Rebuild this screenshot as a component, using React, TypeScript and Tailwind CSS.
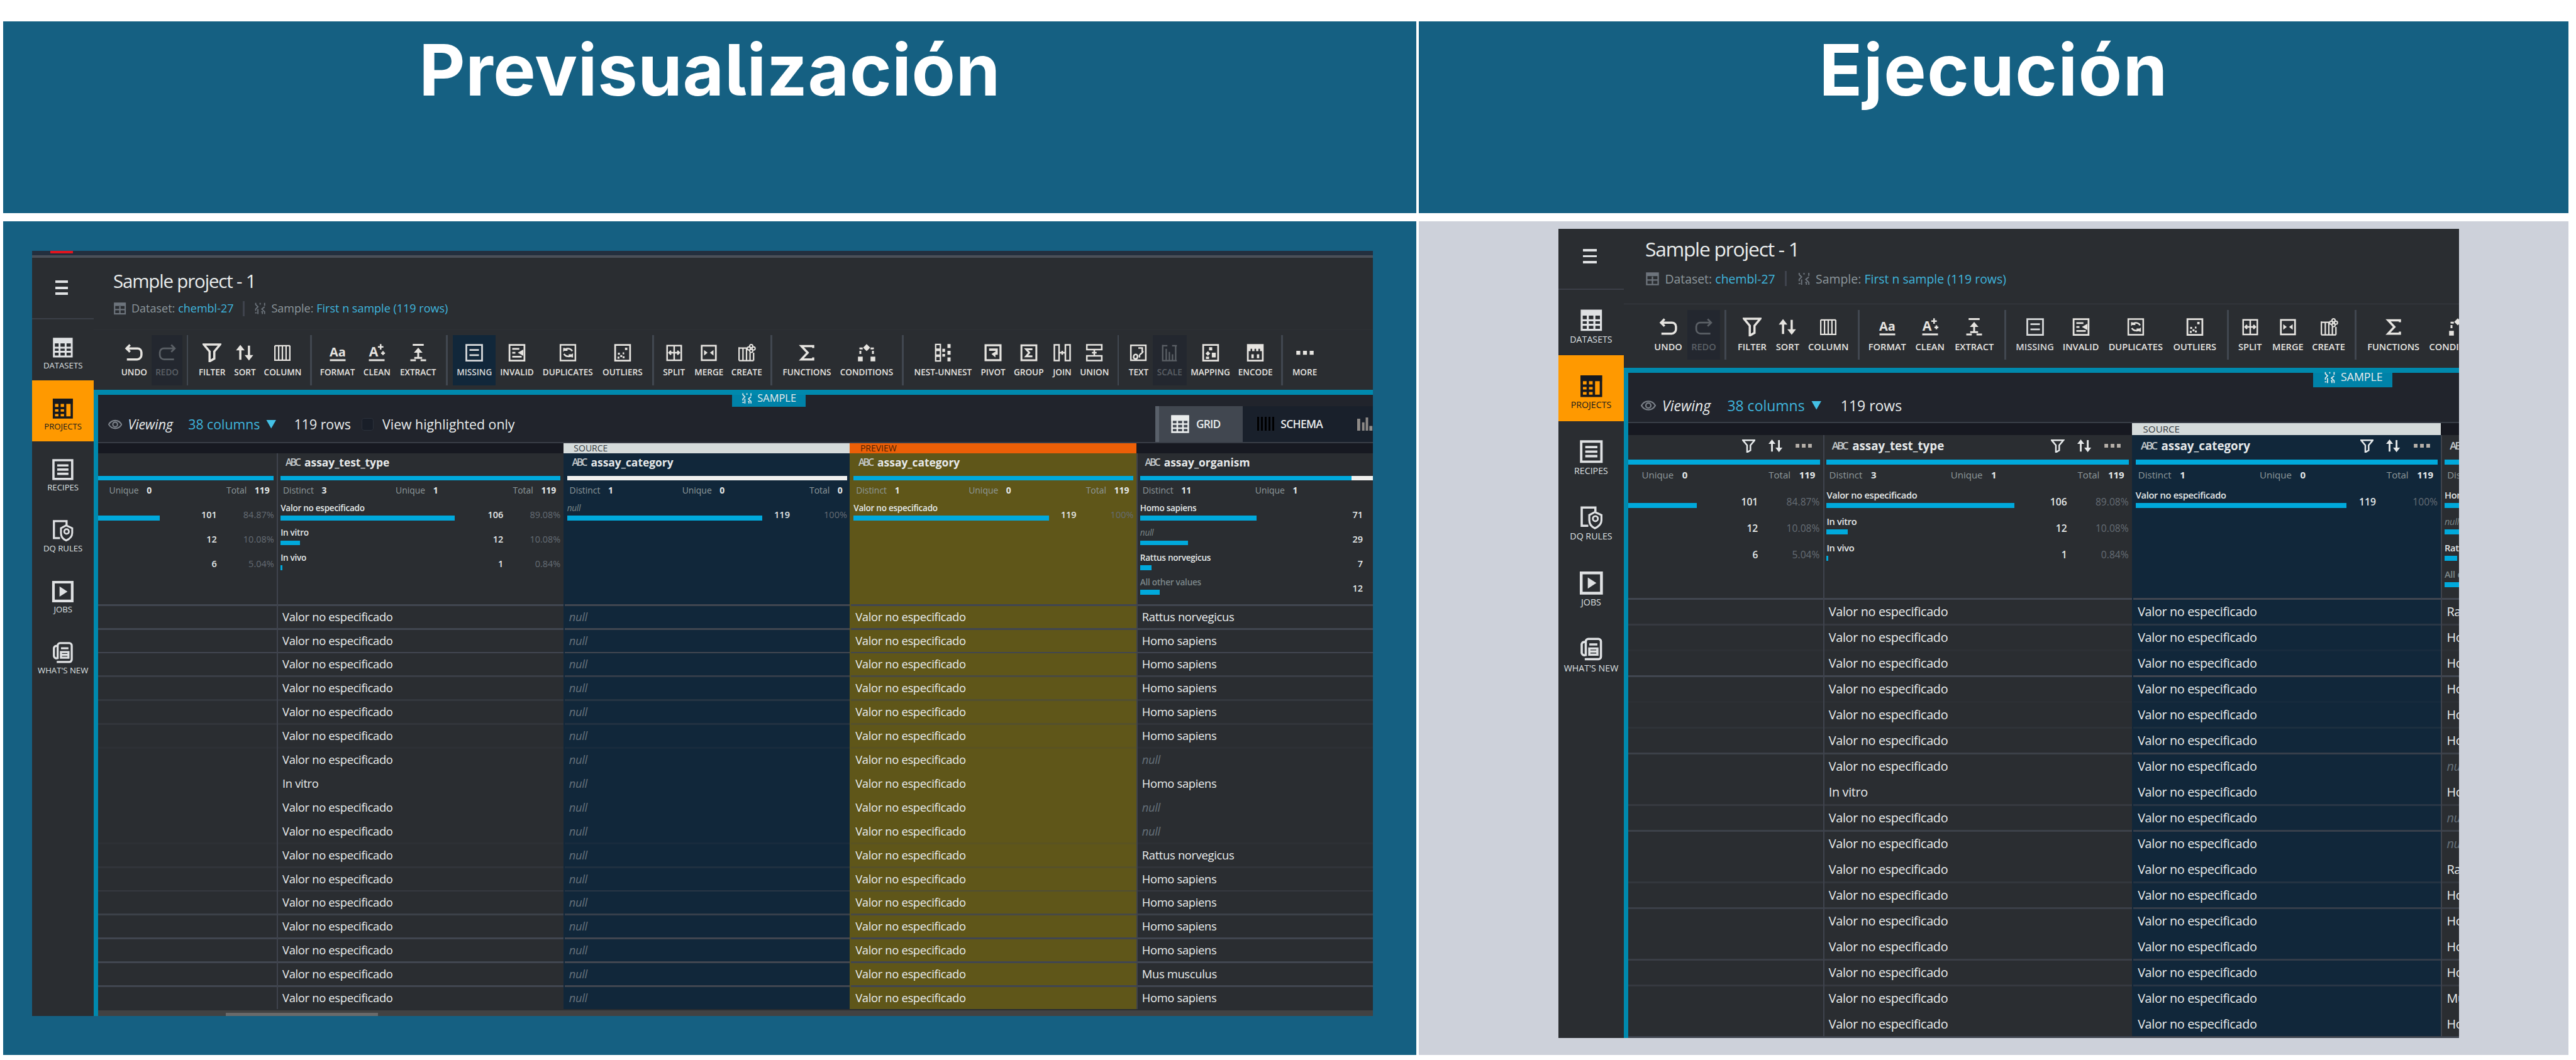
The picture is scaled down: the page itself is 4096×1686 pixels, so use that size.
import type { ReactNode } from 'react'

const icons: Record<string, ReactNode> = {
  undo: <path d="M4 6.500h12.500a5 5 0 0 1 5 5v3.500a5.500 5.500 0 0 1-5.500 5.500H3M7 2 2.500 6.500 7 11" strokeWidth="2.8" />,
  redo: <path d="M20 6.500H7.500a5 5 0 0 0-5 5v3.500A5.500 5.500 0 0 0 8 20.500h12.500M17 2l4.500 4.500L17 11" />,
  filter: <path d="M1.500 1.500h21L15 10.500v9l-6 3.500V10.500z" strokeWidth="2.8" />,
  sort: (
    <>
      <path d="M6.500 21V6M17.500 3v15" strokeWidth="2.8" />
      <path d="M1 9l5.500-7L12 9zM12 15l5.500 7L23 15z" fill="currentColor" stroke="none" />
    </>
  ),
  column: <path d="M2.500 3v18.500h19V3M7.300 3v18M12 3v18M16.700 3v18M2.500 3h19" strokeWidth="1.8" />,
  format: (
    <>
      <text x="12" y="16.5" fontSize="16" fontWeight="700" textAnchor="middle" fill="currentColor" stroke="none">Aa</text>
      <path d="M2 21.500h20" strokeWidth="2.4" />
    </>
  ),
  clean: (
    <>
      <text x="8" y="16.5" fontSize="17" fontWeight="700" textAnchor="middle" fill="currentColor" stroke="none">A</text>
      <path d="M17 1v7M13.500 4.500h7M20 10v5M17.500 12.500h5" strokeWidth="2" />
      <path d="M2 21.500h20" strokeWidth="2.4" />
    </>
  ),
  extract: (
    <>
      <path d="M5 2h14M12 18V8M2 21.500h7M15 21.500h7M7 18.500h10" strokeWidth="2.4" />
      <path d="M6.500 12 12 5.500l5.500 6.500z" fill="currentColor" stroke="none" />
    </>
  ),
  missing: <path d="M2 2h20v20H2zM6 8.500h12M6 15h12" />,
  invalid: (
    <>
      <path d="M2.500 2h19v20h-19zM6 7h9M6 17h12M6 12h4" />
      <path d="M20 8v8l-7-4z" fill="currentColor" stroke="none" />
    </>
  ),
  duplicates: <path d="M2.500 2h19v20h-19zM17.500 10c-2-4-8-4-10.500-1.500V6M7 13.500c2 4 8 4 10.500 1.500v3M7.500 8.500h4M17 15h-4" strokeWidth="2" />,
  outliers: (
    <>
      <path d="M2.500 2h19v20h-19z" />
      <path d="M15 5.500h3v3h-3zM6 12h2.500v2.500H6zM9 15h2.500v2.500H9zM5.500 17H8v2.500H5.500zM12 16.500h2.500V19H12zM12 11.500h2V14h-2z" fill="currentColor" stroke="none" />
    </>
  ),
  split: <path d="M3 3h18v18.500H3zM12 3v18M5 12h14M8 9.500 5.500 12 8 14.500M16 9.500l2.500 2.500-2.500 2.500" strokeWidth="2" />,
  merge: (
    <>
      <path d="M3 3h18v18.500H3z" />
      <path d="M6 8.500v7l4.500-3.500zM18 8.500v7L13.500 12z" fill="currentColor" stroke="none" />
    </>
  ),
  create: (
    <>
      <path d="M2.500 6h11M2.500 5v17M7.500 6v16M12 6v16M16.500 12v10M21 12v10M2.500 22H21" strokeWidth="1.8" />
      <circle cx="18" cy="3.500" r="2" strokeWidth="1.6" />
      <circle cx="15" cy="6.500" r="2" strokeWidth="1.6" />
      <circle cx="21" cy="6.500" r="2" strokeWidth="1.6" />
      <circle cx="18" cy="9.500" r="2" strokeWidth="1.6" />
    </>
  ),
  functions: <path d="M20 6V3.500H5l8 8.500-8 8.500h15V18" strokeWidth="2.8" />,
  conditions: (
    <>
      <path d="M12 1l4.500 4.500L12 10 7.500 5.500zM1 17h6v6H1zM17 17h6v6h-6z" fill="currentColor" stroke="none" />
      <path d="M7 6.500H4V15M17 6.500h3V15" strokeWidth="2.4" strokeDasharray="4 2" />
    </>
  ),
  nest: (
    <>
      <path d="M3 1.500h6v6H3zM3 9h6v6H3zM3 16.500h6v6H3z" strokeWidth="1.8" />
      <path d="M11.500 7h3.500v4h-3.500zM11.500 13.500h3.500v3.500h-3.500zM18 1h4v5h-4zM18 9.500h4v5h-4zM18 18h4v5h-4z" fill="currentColor" stroke="none" />
    </>
  ),
  pivot: (
    <>
      <path d="M2.500 2.500h19v19h-19z" strokeWidth="2.6" />
      <path d="M7 6.500h11v8h-3V18l-5-4.500 5-3v-1H7z" fill="currentColor" stroke="none" />
    </>
  ),
  group: <path d="M2.500 2.500h19v19h-19zM16.500 7.500h-8l4 4.500-4 4.500h8" strokeWidth="2.4" />,
  join: <path d="M2 2h6v20H2zM16 2h6v20h-6zM8 12h8M12 9.500v5" strokeWidth="2" />,
  union: <path d="M2.500 2h19v6h-19zM2.500 16h19v6h-19zM12 8v8M9 12h6" strokeWidth="2" />,
  text: <path d="M2.500 2.500h19v19h-19zM6 18c0-5 5-5 5-1s-5 3-5 1M12 6h5v6M14 18c-3-4 4-5 4-8" strokeWidth="2" />,
  scale: <path d="M3 2v20h18M7.500 7v15M11.500 11v11M15.500 14v8M19.500 3v19M3 3h6M15 3h6" strokeWidth="1.8" />,
  mapping: (
    <>
      <path d="M2.500 2h19v20h-19z" />
      <path d="M10 5h4v4h-4zM5.500 13l3-3 3 3-3 3zM13.500 12h5v6h-5zM6 17h4v3H6z" fill="currentColor" stroke="none" />
    </>
  ),
  encode: (
    <>
      <path d="M2.500 2h19v20h-19z" />
      <path d="M3 3h18v7h-3V7h-2v3h-3V7h-2v3H8V7H6v3H3zM7 14h3v5H7zM14 14h3v5h-3z" fill="currentColor" stroke="none" />
    </>
  ),
  more: <path d="M1 9.500h5v5H1zM9.500 9.500h5v5h-5zM18 9.500h5v5h-5z" fill="currentColor" stroke="none" />,
  datasets: (
    <>
      <path d="M2.500 2.500h19v19h-19zM2.500 12h19M2.500 16.500h19M8.500 6v15M15 6v15" strokeWidth="2" />
      <path d="M2 2h20v5.500H2z" fill="currentColor" stroke="none" />
    </>
  ),
  projects: (
    <>
      <path d="M2.500 2.500h19v19h-19zM14.500 4v18M8.500 6v15M3 11.500h11M3 16.500h11" strokeWidth="2.4" />
      <path d="M1.500 1.500h21V7h-21z" fill="currentColor" stroke="none" />
    </>
  ),
  recipes: <path d="M2 2h20v20H2zM6 7.500h12M6 12h12M6 16.500h12" strokeWidth="2.4" />,
  rules: (
    <>
      <path d="M9 20H2.500V2H16v4" strokeWidth="2.2" />
      <path d="M15.500 6.500l6.500 3v5c0 4-3 6.500-6.500 8-3.500-1.500-5.500-4-5.500-8v-5z" strokeWidth="2" />
      <circle cx="16" cy="13" r="2.5" strokeWidth="1.8" />
    </>
  ),
  jobs: (
    <>
      <path d="M2 2h20v20H2z" strokeWidth="2.8" />
      <path d="M8.500 6.500v11l8.500-5.500z" fill="currentColor" stroke="none" />
    </>
  ),
  news: <path d="M6.500 5v13a3 3 0 0 1-4-2V7a3 3 0 0 1 3-2M6.500 19V4.500A2.500 2.500 0 0 1 9 2h10a2.500 2.500 0 0 1 2.500 2.500v15A2.500 2.500 0 0 1 19 22H5.500M10 7.500h8M10 11.500h8v6h-8zM10 14.500h8" strokeWidth="2.2" />,
  sample: <path d="M4 2v3l4 4-4 4v3M20 2v5M12 2v3M20 22v-4l-5-5 5-4M8 13v9M3 20h3M14 18h2v4" strokeWidth="2" />,
  eye: (
    <>
      <path d="M1 12c5-9 17-9 22 0-5 9-17 9-22 0z" strokeWidth="2.2" />
      <circle cx="12" cy="12" r="4" strokeWidth="2.2" />
    </>
  ),
  grid: (
    <>
      <path d="M2 2h20v20H2zM8.500 8v13M15.500 8v13M2 12h20M2 17h20" strokeWidth="2" />
      <path d="M1 1.500h22V8H1z" fill="currentColor" stroke="none" />
    </>
  ),
  dataset: (
    <>
      <path d="M2.500 2.500h19v19h-19zM3 14h18M12 8v13" strokeWidth="2.4" />
      <path d="M2 2h20v5.500H2z" fill="currentColor" stroke="none" />
    </>
  ),
}

function Icon({ name, className }: { name: string; className: string }) {
  return (
    <svg viewBox="0 0 24 24" fill="none" stroke="currentColor" strokeWidth="2.2" className={`shrink-0 ${className}`}>
      {icons[name]}
    </svg>
  )
}

const scaled = (n: number) => `calc(${n}px * var(--u))`

type Tool = { sep?: boolean; label?: string; icon?: string; ml: number; w: number; state?: 'off' | 'on' }

const tools: Tool[] = [
  { label: 'UNDO', icon: 'undo', ml: 0, w: 57 },
  { label: 'REDO', icon: 'redo', ml: 0.5, w: 50, state: 'off' },
  { sep: true, ml: 7, w: 3 },
  { label: 'FILTER', icon: 'filter', ml: 10, w: 58 },
  { label: 'SORT', icon: 'sort', ml: 0, w: 50 },
  { label: 'COLUMN', icon: 'column', ml: 1, w: 72 },
  { sep: true, ml: 9, w: 3 },
  { label: 'FORMAT', icon: 'format', ml: 7, w: 70 },
  { label: 'CLEAN', icon: 'clean', ml: 1, w: 58 },
  { label: 'EXTRACT', icon: 'extract', ml: 0, w: 77 },
  { sep: true, ml: 7, w: 3 },
  { label: 'MISSING', icon: 'missing', ml: 9, w: 70, state: 'on' },
  { label: 'INVALID', icon: 'invalid', ml: 0, w: 70 },
  { label: 'DUPLICATES', icon: 'duplicates', ml: 0, w: 97 },
  { label: 'OUTLIERS', icon: 'outliers', ml: 0, w: 83 },
  { sep: true, ml: 7.5, w: 3 },
  { label: 'SPLIT', icon: 'split', ml: 5.5, w: 54 },
  { label: 'MERGE', icon: 'merge', ml: 1, w: 59 },
  { label: 'CREATE', icon: 'create', ml: 0, w: 65 },
  { sep: true, ml: 7, w: 3 },
  { label: 'FUNCTIONS', icon: 'functions', ml: 9.5, w: 94 },
  { label: 'CONDITIONS', icon: 'conditions', ml: 0, w: 102 },
  { sep: true, ml: 7.5, w: 3 },
  { label: 'NEST-UNNEST', icon: 'nest', ml: 9, w: 110 },
  { label: 'PIVOT', icon: 'pivot', ml: 0, w: 55 },
  { label: 'GROUP', icon: 'group', ml: 0, w: 62 },
  { label: 'JOIN', icon: 'join', ml: 0, w: 48 },
  { label: 'UNION', icon: 'union', ml: 0, w: 58 },
  { sep: true, ml: 8.5, w: 3 },
  { label: 'TEXT', icon: 'text', ml: 9, w: 46 },
  { label: 'SCALE', icon: 'scale', ml: 0, w: 56, state: 'off' },
  { label: 'MAPPING', icon: 'mapping', ml: 0, w: 78 },
  { label: 'ENCODE', icon: 'encode', ml: 0, w: 70 },
  { sep: true, ml: 7, w: 3 },
  { label: 'MORE', icon: 'more', ml: 8, w: 56 },
]

function Toolbar() {
  return (
    <div className="flex h-(--tools) shrink-0 overflow-hidden border-t-2 border-(--tools-line) pt-[9px] pl-(--tools-x)">
      {tools.map((t, i) =>
        t.sep ? (
          <div key={i} className="h-[82px] shrink-0 bg-[#414750]" style={{ width: 3, marginLeft: scaled(t.ml) }} />
        ) : (
          <div
            key={i}
            className={`flex h-[82px] shrink-0 flex-col items-center pt-[13px] ${
              t.state === 'on' ? 'bg-(--on-bg) text-[#d8dadb]' : t.state === 'off' ? 'bg-[#23272f] text-[#5b6066]' : 'text-[#e6e4e0]'
            }`}
            style={{ width: scaled(t.w), marginLeft: scaled(t.ml) }}
          >
            <Icon name={t.icon!} className="size-[31px]" />
            <div className="mt-[6px] text-[length:calc(14px*var(--u))] leading-[22px] font-semibold whitespace-nowrap">{t.label}</div>
          </div>
        ),
      )}
    </div>
  )
}

const nav = [
  ['datasets', 'DATASETS'],
  ['projects', 'PROJECTS'],
  ['recipes', 'RECIPES'],
  ['rules', 'DQ RULES'],
  ['jobs', 'JOBS'],
  ['news', "WHAT'S NEW"],
]

function Sidebar() {
  return (
    <div className="w-(--side) shrink-0 bg-[#2a2d31] text-[#dfe1e3]">
      <div className="flex h-(--menu) flex-col items-center border-b-[3px] border-[#3b3f48] pt-(--menu-y) pr-[5px]">
        <div className="flex w-[calc(21px*var(--u))] flex-col gap-[6px]">
          <div className="h-[4px] bg-current" />
          <div className="h-[4px] bg-current" />
          <div className="h-[4px] bg-current" />
        </div>
      </div>
      {nav.map(([icon, label], i) => (
        <div
          key={label}
          className={`flex h-[calc(100.2px*var(--u))] flex-col items-center pt-[calc(28px*var(--u))] ${i === 1 ? 'bg-[#ff9900] text-[#16191f]' : ''}`}
        >
          <Icon name={icon} className="size-[calc(37px*var(--u))]" />
          <div className="text-[length:calc(13.6px*var(--u))] leading-[calc(22px*var(--u))] font-medium whitespace-nowrap">{label}</div>
        </div>
      ))}
    </div>
  )
}

type Entry = { name: string; count: number; pct?: string; muted?: boolean; italic?: boolean }
type Column = {
  name: string
  kind?: 'source' | 'preview'
  distinct: string
  unique: string
  total: string
  valid: number
  entries: Entry[]
  rows: string[]
}

const rowCount = 17
const fill = (v: string) => Array.from({ length: rowCount }, () => v)
const unspecified = 'Valor no especificado'

const hiddenColumn: Column = {
  name: '',
  distinct: '',
  unique: '0',
  total: '119',
  valid: 100,
  entries: [
    { name: '', count: 101, pct: '84.87%' },
    { name: '', count: 12, pct: '10.08%' },
    { name: '', count: 6, pct: '5.04%' },
  ],
  rows: fill(''),
}

const testType: Column = {
  name: 'assay_test_type',
  distinct: '3',
  unique: '1',
  total: '119',
  valid: 100,
  entries: [
    { name: unspecified, count: 106, pct: '89.08%' },
    { name: 'In vitro', count: 12, pct: '10.08%' },
    { name: 'In vivo', count: 1, pct: '0.84%' },
  ],
  rows: fill(unspecified).map((v, i) => (i === 7 ? 'In vitro' : v)),
}

const filled: Entry[] = [{ name: unspecified, count: 119, pct: '100%' }]

const sourceNull: Column = {
  name: 'assay_category',
  kind: 'source',
  distinct: '1',
  unique: '0',
  total: '0',
  valid: 0,
  entries: [{ name: 'null', count: 119, pct: '100%', muted: true, italic: true }],
  rows: fill('null'),
}

const preview: Column = { name: 'assay_category', kind: 'preview', distinct: '1', unique: '0', total: '119', valid: 100, entries: filled, rows: fill(unspecified) }
const sourceFilled: Column = { ...preview, kind: 'source' }

const organism: Column = {
  name: 'assay_organism',
  distinct: '11',
  unique: '1',
  total: '90',
  valid: 75.5,
  entries: [
    { name: 'Homo sapiens', count: 71 },
    { name: 'null', count: 29, muted: true, italic: true },
    { name: 'Rattus norvegicus', count: 7 },
    { name: 'All other values', count: 12, muted: true },
  ],
  rows: [
    'Rattus norvegicus',
    'Homo sapiens',
    'Homo sapiens',
    'Homo sapiens',
    'Homo sapiens',
    'Homo sapiens',
    'null',
    'Homo sapiens',
    'null',
    'null',
    'Rattus norvegicus',
    'Homo sapiens',
    'Homo sapiens',
    'Homo sapiens',
    'Homo sapiens',
    'Mus musculus',
    'Homo sapiens',
  ],
}

const columnBg = { source: 'bg-[#11273a] border-[#11273a]', preview: 'bg-[#5f5619] border-[#5f5619]', plain: 'bg-[#2a2d31] border-[#3f434d]' }
const stripBg = { source: 'bg-[#d5dbdb] text-[#33383d]', preview: 'bg-[#ec5f07] text-[#4a1f05]', plain: 'bg-[#171921]' }

function Stat({ label, value }: { label: string; value: string }) {
  return (
    <div className="flex gap-[calc(13px*var(--u))]">
      <span className="text-[#8f999b]">{label}</span>
      <span className="font-bold text-[#e4e8e8]">{value}</span>
    </div>
  )
}

function DataColumn({ col, lines, actions }: { col: Column; lines: number[]; actions: boolean }) {
  const kind = col.kind ?? 'plain'
  return (
    <div className="w-(--col) shrink-0">
      <div className={`h-(--strip) pl-[calc(17px*var(--u))] text-[length:calc(14.5px*var(--u))] leading-(--strip) ${stripBg[kind]}`}>
        {kind === 'plain' ? '' : kind.toUpperCase()}
      </div>
      <div className={`border-l-[3px] ${columnBg[kind]}`}>
        <div className="h-(--stats) pr-[5px] pl-[4px]">
          <div className="flex h-(--name) items-start gap-[calc(8px*var(--u))] pr-[calc(11px*var(--u))] pl-[calc(8px*var(--u))] leading-(--name-lh) text-[#e6e9ea]">
            <span className="text-[length:calc(16px*var(--u))] font-semibold tracking-[-0.17em] text-[#c3c8ca]">{col.name && 'ABC'}</span>
            <span className="text-[length:calc(18px*var(--u))] font-bold">{col.name}</span>
            {actions && (
              <div className="ml-auto flex h-(--name-lh) items-center gap-[20px]">
                <Icon name="filter" className="size-[22px]" />
                <Icon name="sort" className="size-[25px]" />
                <Icon name="more" className="size-[29px] text-[#b5afa8]" />
              </div>
            )}
          </div>
          <div className="h-[8px] bg-[#f0f0ee]">
            <div className="h-full bg-[#00a9dc]" style={{ width: `${col.valid}%` }} />
          </div>
          <div className="grid h-(--distinct) grid-cols-[calc(185px*var(--u))_1fr_auto] pr-[calc(7px*var(--u))] pl-[calc(4px*var(--u))] text-[length:calc(14.4px*var(--u))] leading-[34px]">
            <Stat label="Distinct" value={col.distinct} />
            <Stat label="Unique" value={col.unique} />
            <Stat label="Total" value={col.total} />
          </div>
          {col.entries.map((e, i) => (
            <div
              key={i}
              className="mb-[8.5px] grid grid-cols-[calc(321px*var(--u))_calc(45px*var(--u))_calc(94px*var(--u))] items-end text-[length:calc(15px*var(--u))] leading-[20px]"
            >
              <div>
                <div
                  className={`h-(--label) text-[length:calc(14px*var(--u))] leading-(--label) tracking-[-0.02em] whitespace-nowrap ${e.muted ? 'text-[#7c8789]' : 'text-[#e4e8e8]'} ${e.italic ? 'italic' : 'font-semibold'}`}
                >
                  {e.name}
                </div>
                <div className="h-[8px] bg-[#00a9dc]" style={{ width: `${(e.count / 119) * 100}%` }} />
              </div>
              <div className="text-right font-semibold text-[#e4e8e8]">{e.count}</div>
              <div className="text-right text-[#656c74]">{e.pct}</div>
            </div>
          ))}
        </div>
        {col.rows.map((v, i) => (
          <div key={i} className="h-(--row)">
            <div className="h-[3px] bg-[#414650]" style={{ opacity: lines[i] }} />
            <div
              className={`pl-[calc(7px*var(--u))] text-[length:calc(19px*var(--u))] leading-(--cell) tracking-[-0.018em] whitespace-nowrap ${v === 'null' ? 'text-[#66717a] italic' : 'text-[#e9ecec]'}`}
            >
              {v}
            </div>
          </div>
        ))}
      </div>
    </div>
  )
}

type PanelProps = { className: string; columns: Column[]; lines: number[]; full: boolean }

function Panel({ className, columns, lines, full }: PanelProps) {
  return (
    <div className={`flex flex-col overflow-hidden bg-[#2a2d31] text-[#e9ecec] ${className}`}>
      {full && (
        <div className="h-[12px] shrink-0 border-b-[5px] border-[#4a4f58] bg-[#232f3e]">
          <div className="ml-[30px] h-[4px] w-[37px] bg-[#e0141e]" />
        </div>
      )}
      <div className="flex min-h-0 flex-1">
        <Sidebar />
        <div className="flex min-w-0 flex-1 flex-col">
          <div className="h-(--head) shrink-0 pt-(--head-y) pl-(--head-x)">
            <div className="text-[length:calc(30.5px*var(--u))] leading-[calc(45px*var(--u))] tracking-[-0.04em]">Sample project - 1</div>
            <div className="flex h-[calc(46px*var(--u))] items-center text-[length:calc(18.6px*var(--u))] text-[#8d979c]">
              <Icon name="dataset" className="size-[calc(22px*var(--u))] text-[#6d747c]" />
              <span className="ml-[calc(8px*var(--u))]">Dataset:</span>
              <span className="ml-[calc(5px*var(--u))] text-[#3fb5dd]">chembl-27</span>
              <div className="mx-[calc(15px*var(--u))] h-[25px] w-[3px] bg-[#3f434d]" />
              <Icon name="sample" className="size-[calc(22px*var(--u))] text-[#6d747c]" />
              <span className="ml-[calc(7px*var(--u))]">Sample:</span>
              <span className="ml-[calc(5px*var(--u))] text-[#3fb5dd]">First n sample (119 rows)</span>
            </div>
          </div>
          <Toolbar />
          <div className="flex min-h-0 flex-1 flex-col border-t-[9px] border-l-[8px] border-[#0089ad]">
            <div className="relative flex h-(--view) shrink-0 border-b-[3px] border-[#383d46] bg-[#21242c]">
              <div className="absolute top-0 left-(--badge-x) flex h-(--badge) w-[calc(121px*var(--u))] items-center justify-center gap-[calc(7px*var(--u))] bg-[#0082a8] pb-[8px] text-[length:calc(17px*var(--u))] leading-none">
                <Icon name="sample" className="size-[calc(20px*var(--u))]" />
                SAMPLE
              </div>
              <div className="mt-(--view-y) flex h-[32px] items-center pl-(--view-x) text-[length:calc(22px*var(--u))] whitespace-nowrap">
                <Icon name="eye" className="size-[calc(23px*var(--u))] text-[#7d838b]" />
                <span className="ml-[calc(10px*var(--u))] w-[calc(99px*var(--u))] italic">Viewing</span>
                <span className="text-[#3fb5dd]">38 columns</span>
                <svg viewBox="0 0 16 14" className="ml-[calc(10px*var(--u))] h-[14px] w-[17px] fill-[#44c1e6]">
                  <path d="M0 0h16L8 14z" />
                </svg>
                <span className="ml-[calc(29px*var(--u))]">119 rows</span>
                {full && (
                  <>
                    <div className="ml-[18px] h-[20px] w-[19px] rounded-sm border-2 border-[#2b303a] bg-[#191e28]" />
                    <span className="ml-[15px]">View highlighted only</span>
                  </>
                )}
              </div>
              {full && (
                <div className="mt-[18px] ml-auto flex w-[357px] shrink-0 overflow-hidden bg-[#19202b] text-[18px] font-semibold">
                  <div className="flex w-[144px] shrink-0 items-center border-l-[7px] border-[#59606a] bg-[#414750] pl-[19px]">
                    <Icon name="grid" className="size-[32px]" />
                    <span className="ml-[10px] tracking-[-0.05em]">GRID</span>
                  </div>
                  <div className="flex shrink-0 items-center pl-[23px]">
                    <div className="flex h-[23px] w-[28px] justify-between">
                      {[0, 1, 2, 3, 4].map((n) => (
                        <div key={n} className="w-[3px] bg-black" />
                      ))}
                    </div>
                    <span className="ml-[11px] w-[126px] tracking-[-0.04em]">SCHEMA</span>
                    <svg viewBox="0 0 26 22" className="h-[22px] w-[26px] shrink-0 fill-[#8f8b88]">
                      <path d="M0 2h5v20H0zM8 8h4v14H8zM14 0h4v22h-4zM20 14h5v8h-5z" />
                    </svg>
                  </div>
                </div>
              )}
            </div>
            <div className="flex min-h-0 flex-1 overflow-hidden">
              <div className="ml-(--scroll) flex">
                {columns.map((c, i) => (
                  <DataColumn key={i} col={c} lines={lines} actions={!full} />
                ))}
              </div>
            </div>
            {full ? (
              <div className="h-[10px] shrink-0 bg-[#424242] pt-[5px]">
                <div className="ml-[210px] h-[5px] w-[250px] bg-[#6a6a6a]" />
              </div>
            ) : (
              <div className="h-[3px] shrink-0 bg-[#3f444e]" />
            )}
          </div>
        </div>
      </div>
    </div>
  )
}

const previewVars =
  '[--u:1] [--side:101px] [--menu:101px] [--menu-y:37px] [--head:117px] [--head-y:15px] [--head-x:32px] [--tools:100px] [--tools-x:38px] [--tools-line:#2d3035] [--view:79px] [--view-y:32px] [--view-x:16px] [--badge-x:1041px] [--badge:19px] [--strip:17px] [--name:36.5px] [--name-lh:30px] [--stats:247.5px] [--distinct:34px] [--label:24px] [--row:39.15px] [--cell:36px] [--col:470.7px] [--scroll:-177px] [--on-bg:#11273a]'

const runVars =
  '[--u:1.079] [--side:108px] [--menu:100px] [--menu-y:33px] [--head:123px] [--head-y:8.5px] [--head-x:35px] [--tools:105px] [--tools-x:42px] [--tools-line:#383c43] [--view:83px] [--view-y:38px] [--view-x:20px] [--badge-x:1125px] [--badge:24px] [--strip:19.5px] [--name:40.5px] [--name-lh:36px] [--stats:268px] [--distinct:36.5px] [--label:27px] [--row:42.35px] [--cell:39px] [--col:507.6px] [--scroll:-188px] [--on-bg:transparent]'

const previewLines = [1, 1, 1, 0.7, 0.45, 0.35, 0.15, 0, 0, 0, 0.15, 0.3, 0.5, 0.8, 1, 1, 1]
const runLines = [1, 0.5, 0.15, 1, 0.1, 0.25, 0.8, 0, 0.5, 0.8, 0, 0.4, 0.75, 0, 0.7, 0.5, 0]

function Heading({ className, children }: { className: string; children: ReactNode }) {
  return (
    <div
      className={`bg-[#156082] text-center font-[Inter,sans-serif] text-[117px] leading-[160px] font-bold text-white [font-feature-settings:'cv05'] ${className}`}
    >
      {children}
    </div>
  )
}

export default function App() {
  return (
    <div className="h-[1686px] w-[4096px] overflow-hidden bg-white">
      <div className="grid w-[4232px] grid-cols-[2322px_1889px] grid-rows-[315px_1370px] gap-x-[4px] gap-y-[14px] pt-[35px] pl-[5px] font-['Open_Sans',sans-serif] [zoom:0.967864]">
        <Heading className="tracking-[0.7px]">Previsualización</Heading>
        <Heading className="tracking-[1.6px]">Ejecución</Heading>
        <div className="bg-[#156082] pt-[48px] pl-[48px]">
          <Panel
            full
            className={`h-[1258px] w-[2202px] ${previewVars}`}
            columns={[hiddenColumn, testType, sourceNull, preview, organism]}
            lines={previewLines}
          />
        </div>
        <div className="bg-[#cdd1da] pt-[12px] pl-[229px]">
          <Panel full={false} className={`h-[1330px] w-[1480px] ${runVars}`} columns={[hiddenColumn, testType, sourceFilled, organism]} lines={runLines} />
        </div>
      </div>
    </div>
  )
}
